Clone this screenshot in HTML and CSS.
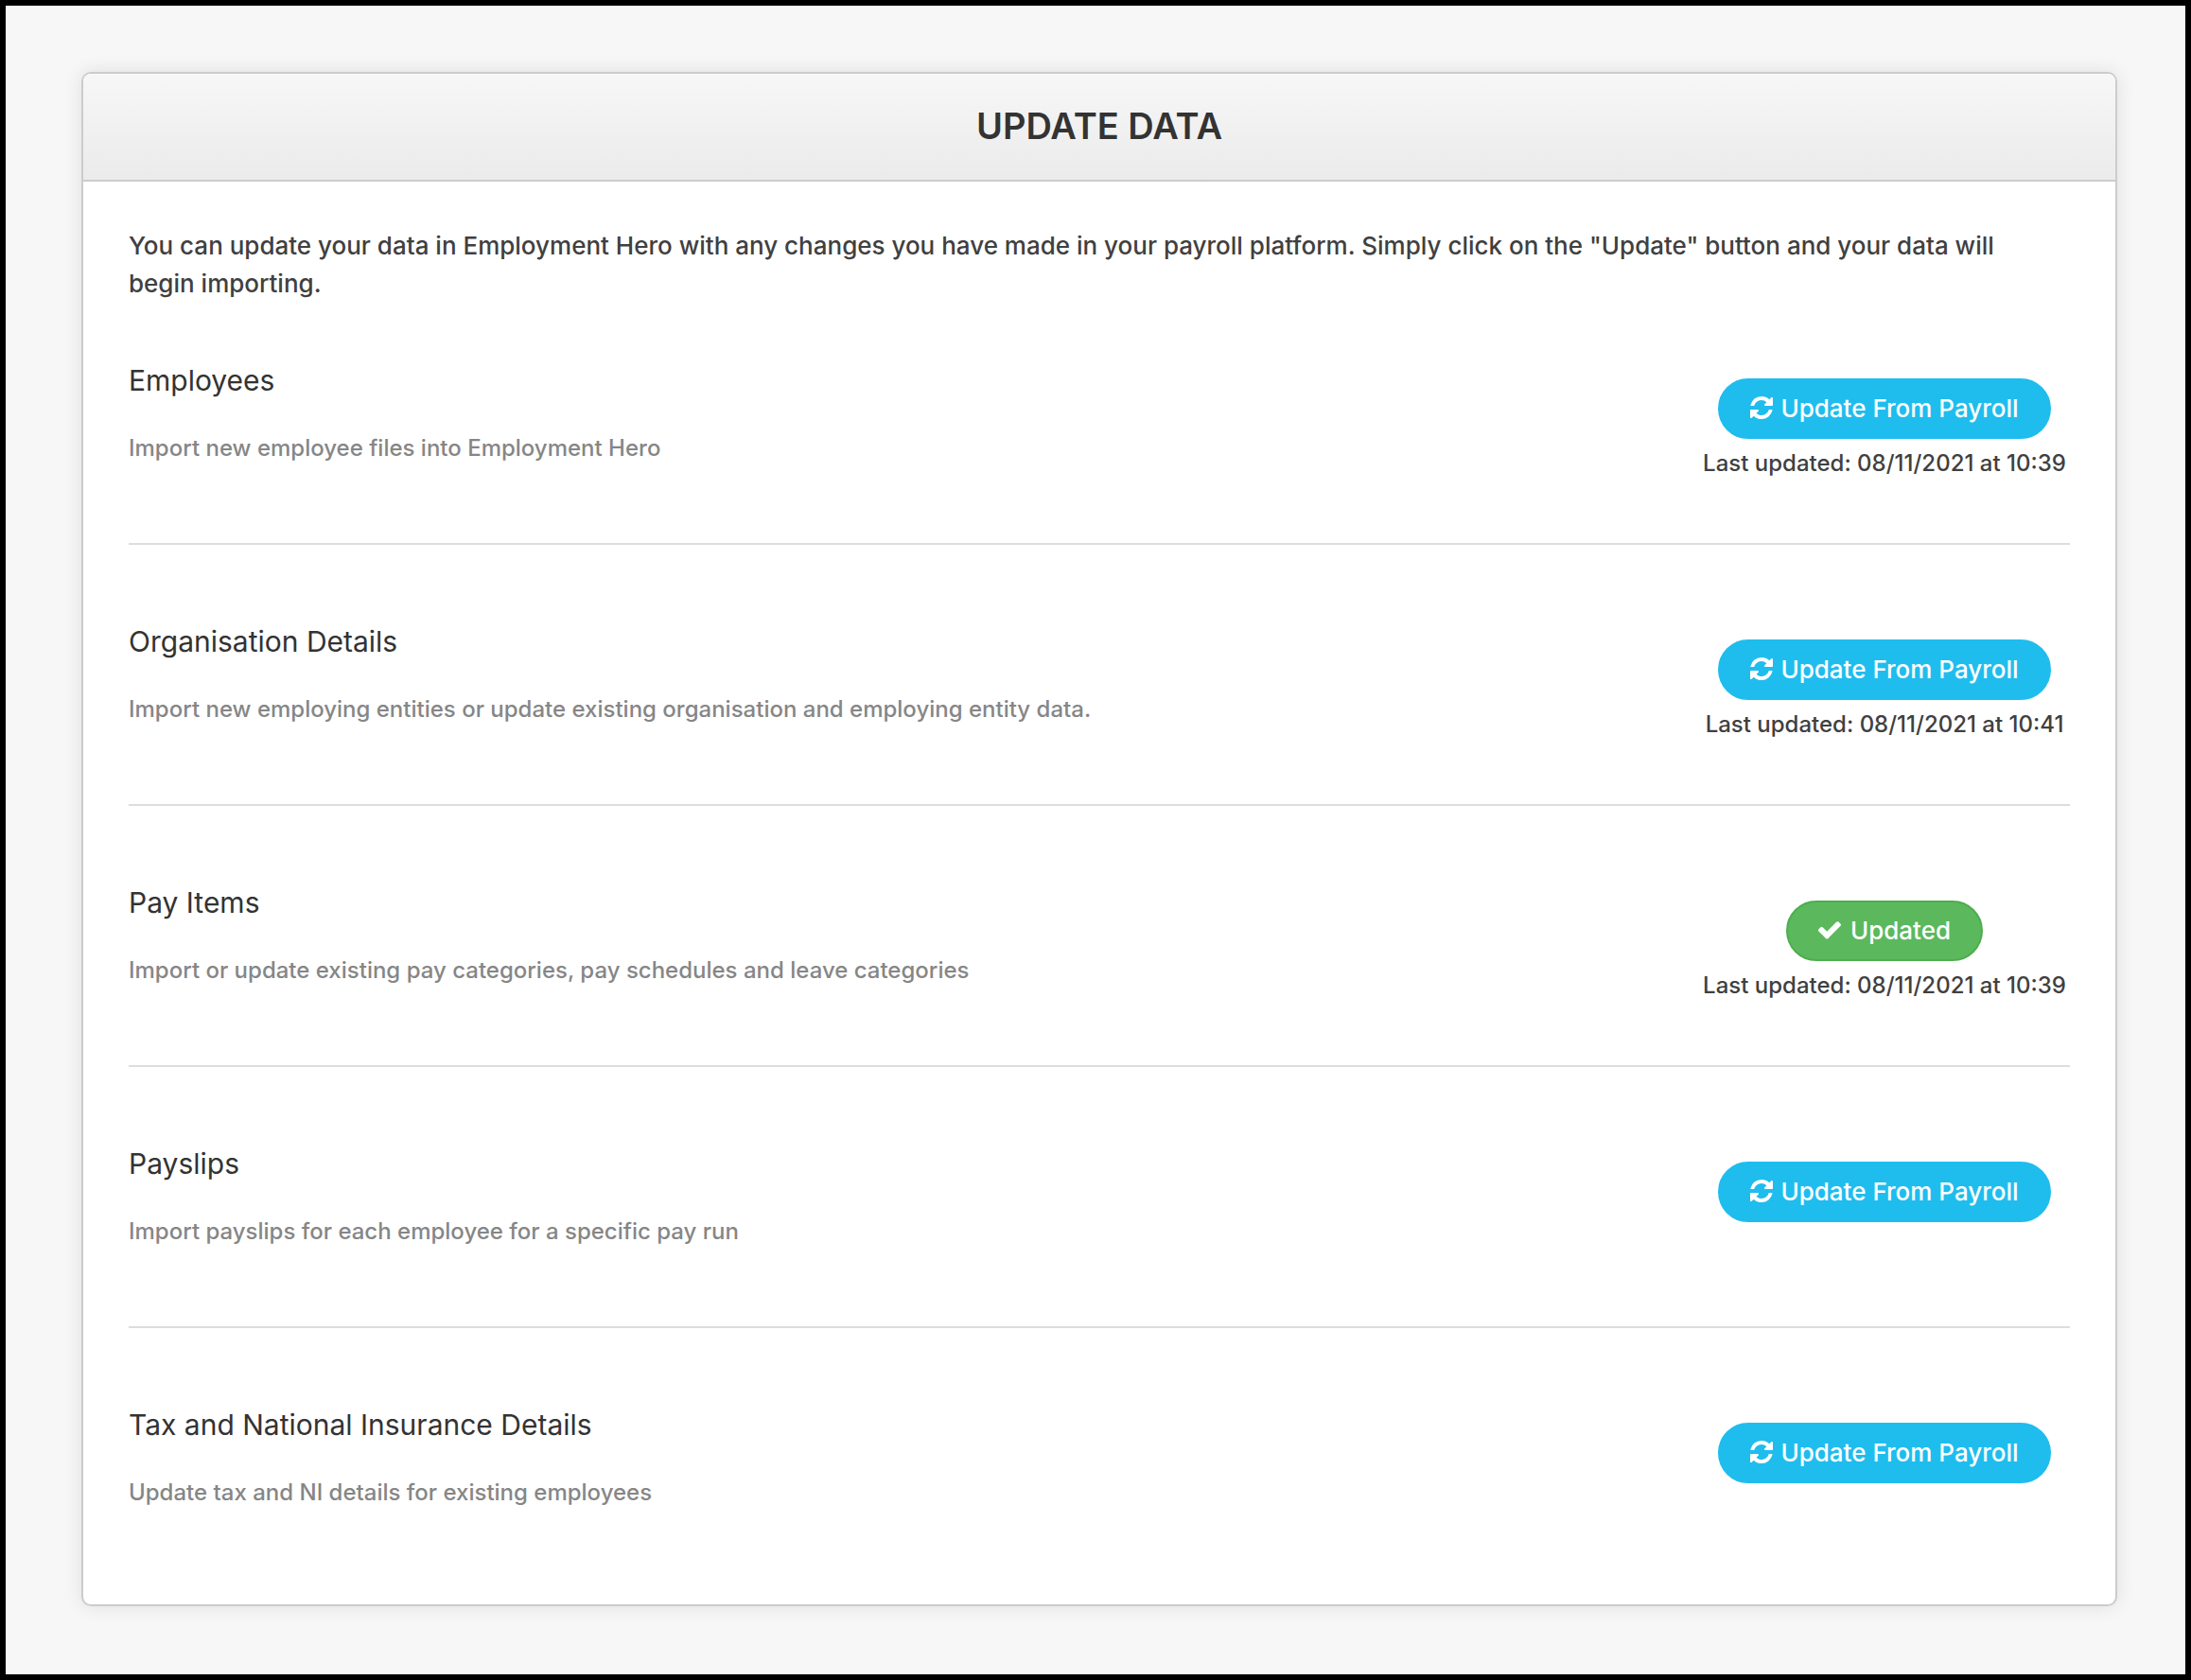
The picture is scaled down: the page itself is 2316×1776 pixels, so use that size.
FILE: index.html
```html
<!DOCTYPE html>
<html lang="en">
<head>
<meta charset="UTF-8">
<meta name="viewport" content="width=device-width, initial-scale=1.0">
<title>Update Data</title>
<link rel="stylesheet" href="styles.css">
</head>
<body>
    <svg class="sprite" aria-hidden="true">
        <symbol id="icon-refresh" viewBox="0 128 1536 1536">
            <path d="M1511 1056q0 5-1 7-64 268-268 434.500t-478 166.500q-146 0-282.500-55t-243.500-157l-129 129q-19 19-45 19t-45-19-19-45v-448q0-26 19-45t45-19h448q26 0 45 19t19 45-19 45l-137 137q71 66 161 102t187 36q134 0 250-65t186-179q11-17 53-117 8-23 30-23h192q13 0 22.500 9.500t9.500 22.500zm25-800v448q0 26-19 45t-45 19h-448q-26 0-45-19t-19-45 19-45l138-138q-148-137-349-137-134 0-250 65t-186 179q-11 17-53 117-8 23-30 23h-199q-13 0-22.500-9.500t-9.500-22.500v-7q65-268 270-434.500t480-166.500q146 0 284 55.500t245 156.500l130-129q19-19 45-19t45 19 19 45z"/>
        </symbol>
        <symbol id="icon-check" viewBox="121 128 1550 1550">
            <path d="M1671 566q0 40-28 68l-724 724-136 136q-28 28-68 28t-68-28l-136-136-362-362q-28-28-28-68t28-68l136-136q28-28 68-28t68 28l294 295 656-657q28-28 68-28t68 28l136 136q28 28 28 68z"/>
        </symbol>
    </svg>

    <main class="panel">
        <header class="panel-header">
            <h1>UPDATE DATA</h1>
        </header>
        <div class="panel-body">
            <p class="intro">You can update your data in Employment Hero with any changes you have made in your payroll platform. Simply click on the "Update" button and your data will begin importing.</p>

            <section class="row">
                <div class="info">
                    <h2>Employees</h2>
                    <p>Import new employee files into Employment Hero</p>
                </div>
                <div class="action">
                    <button type="button" class="btn"><svg class="icon"><use href="#icon-refresh"/></svg>Update From Payroll</button>
                    <p class="updated">Last updated: 08/11/2021 at 10:39</p>
                </div>
            </section>

            <section class="row">
                <div class="info">
                    <h2>Organisation Details</h2>
                    <p>Import new employing entities or update existing organisation and employing entity data.</p>
                </div>
                <div class="action">
                    <button type="button" class="btn"><svg class="icon"><use href="#icon-refresh"/></svg>Update From Payroll</button>
                    <p class="updated">Last updated: 08/11/2021 at 10:41</p>
                </div>
            </section>

            <section class="row">
                <div class="info">
                    <h2>Pay Items</h2>
                    <p>Import or update existing pay categories, pay schedules and leave categories</p>
                </div>
                <div class="action">
                    <button type="button" class="btn btn-success"><svg class="icon"><use href="#icon-check"/></svg>Updated</button>
                    <p class="updated">Last updated: 08/11/2021 at 10:39</p>
                </div>
            </section>

            <section class="row">
                <div class="info">
                    <h2>Payslips</h2>
                    <p>Import payslips for each employee for a specific pay run</p>
                </div>
                <div class="action">
                    <button type="button" class="btn"><svg class="icon"><use href="#icon-refresh"/></svg>Update From Payroll</button>
                </div>
            </section>

            <section class="row">
                <div class="info">
                    <h2>Tax and National Insurance Details</h2>
                    <p>Update tax and NI details for existing employees</p>
                </div>
                <div class="action">
                    <button type="button" class="btn"><svg class="icon"><use href="#icon-refresh"/></svg>Update From Payroll</button>
                </div>
            </section>
        </div>
    </main>
</body>
</html>
```
FILE: styles.css
```css
* {
    box-sizing: border-box;
}
body {
    margin: 0;
    min-height: 100vh;
    padding: 70px 72px 70px 80px;
    border: 6px solid #000;
    background-color: #f7f7f7;
    color: #404040;
    font-family: Inter, Lato, sans-serif;
    font-size: 26px;
    font-weight: 500;
    line-height: 40px;
}
h1, h2, p {
    margin: 0;
}
.sprite {
    display: none;
}
.panel {
    border: 2px solid #ccc;
    border-radius: 10px;
    background-color: #fff;
    box-shadow: 0 0 20px rgba(0, 0, 0, 0.1);
    overflow: hidden;
}
.panel-header {
    padding: 31px 48px 33px;
    border-bottom: 2px solid #ccc;
    background: linear-gradient(#f7f7f7, #ebebeb);
    text-align: center;
}
.panel-header h1 {
    color: #333;
    font-size: 38px;
    font-weight: 600;
    line-height: 48px;
}
.panel-body {
    padding: 48px 48px 84px;
}
.intro {
    margin-bottom: 64px;
    padding-right: 24px;
}
.row {
    display: flex;
    justify-content: space-between;
    min-height: 192px;
    padding-bottom: 66px;
    border-bottom: 2px solid #ddd;
}
.row + .row {
    margin-top: 84px;
}
.row:last-child {
    min-height: 124px;
    padding-bottom: 0;
    border-bottom: none;
}
.info h2 {
    margin-bottom: 36px;
    color: #333;
    font-size: 30px;
    font-weight: 400;
    line-height: 36px;
}
.info p {
    color: #868686;
    font-size: 24px;
    line-height: 36px;
}
.action {
    display: flex;
    flex-direction: column;
    align-items: center;
    width: 392px;
    padding-top: 16px;
}
.btn {
    display: flex;
    align-items: center;
    gap: 8px;
    height: 64px;
    padding: 0 32px 2px;
    border: 2px solid #1fbdee;
    border-radius: 32px;
    background-color: #1fbdee;
    color: #fff;
    font-family: inherit;
    font-size: 26px;
    font-weight: 500;
    cursor: pointer;
}
.btn-success {
    gap: 10px;
    border-color: #4cae4c;
    background-color: #5cb85c;
}
.icon {
    width: 24px;
    height: 24px;
    fill: currentColor;
}
.updated {
    margin-top: 8px;
    font-size: 24px;
    line-height: 36px;
    white-space: nowrap;
}
```
